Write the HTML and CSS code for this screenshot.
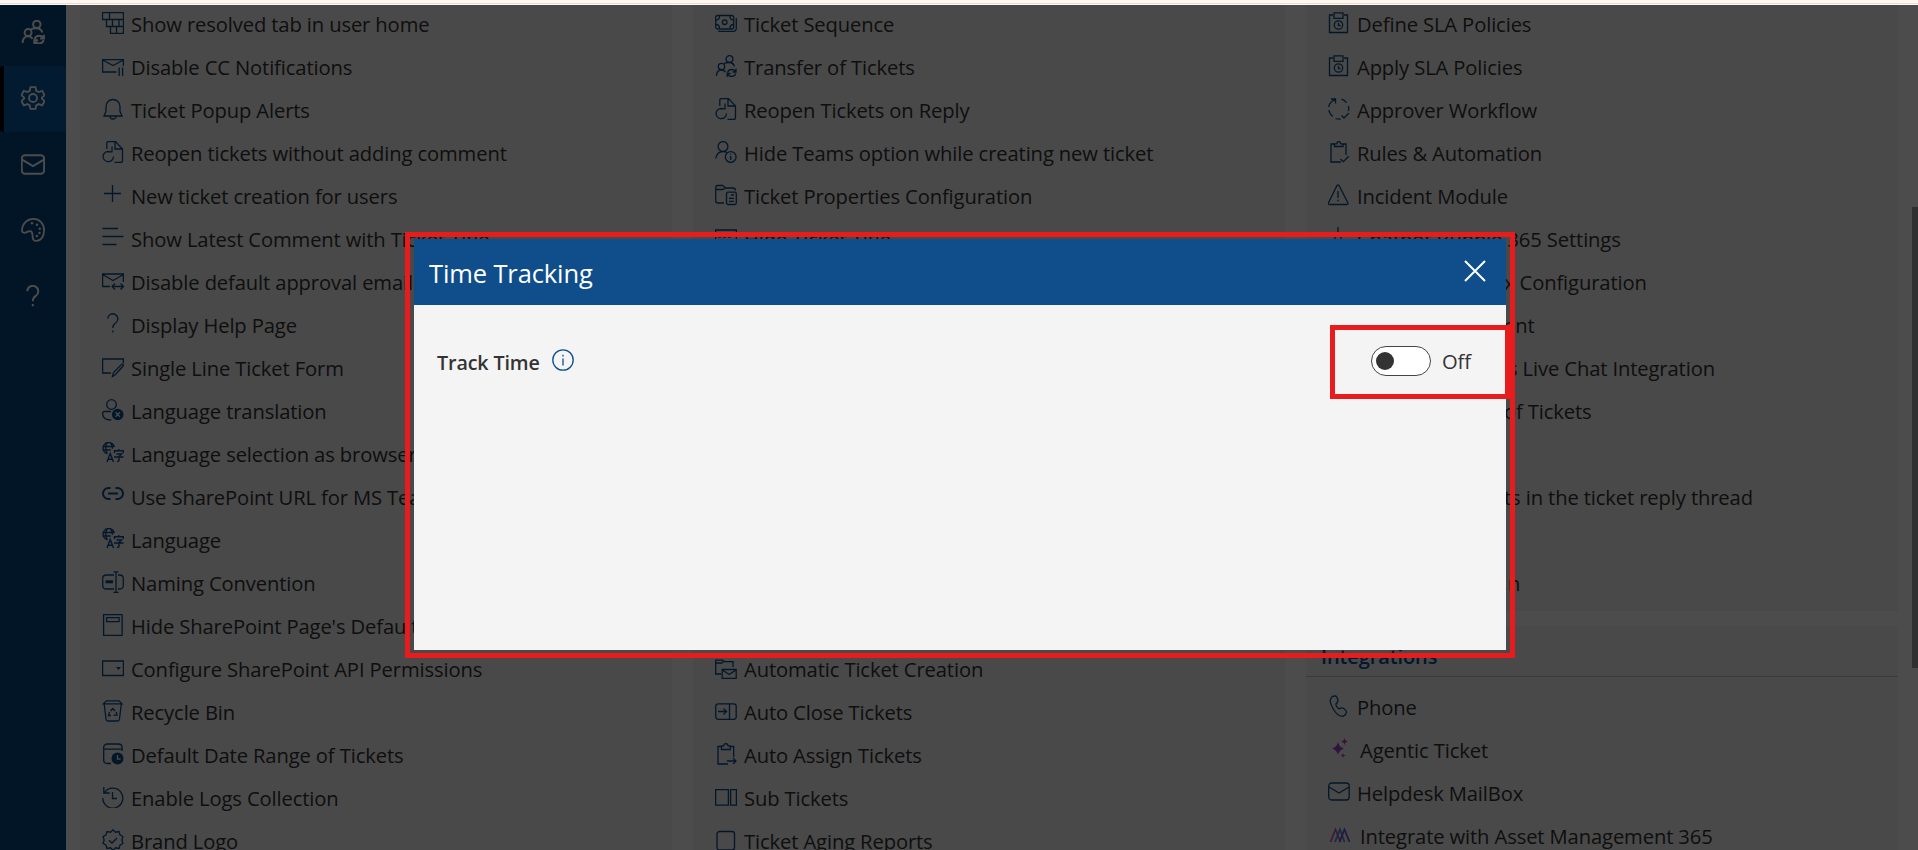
FILE: index.html
```
<!DOCTYPE html>
<html lang="en">
<head>
<meta charset="utf-8">
<title>Helpdesk settings</title>
<link rel="stylesheet" href="styles.css">
</head>
<body>
<svg class="sprite" aria-hidden="true">
  <symbol id="brick" viewBox="0 0 22 22"><path d="M.5.5h21v21h-13v-7h-4v-7h-4zM.5 7.500h21M4.500 14.500h17M7.500.5v7M10.500 7.500v7M17 7.500v7M14.500 14.500v7"/></symbol>
  <symbol id="mailpause" viewBox="0 0 22 22"><path d="M14.500 17H.6V4.600h20.800V11M.6 5l10.400 5.500L21.400 5M17.200 12.500v8.500M20.600 12.500v8.500"/></symbol>
  <symbol id="bell" viewBox="0 0 22 22"><path d="M2 18l2-4.500V8.500a7 7 0 0 1 14 0v5L20 18zM8 18.500a3 2.500 0 0 0 6 0"/></symbol>
  <symbol id="reopen" viewBox="0 0 22 22"><path d="M4.800 8V2.200q0-1.600 1.600-1.600H13.500L20.500 8v11.500q0 2-2 2h-6M13 .8V8h7.300M8.500 10.800a5.200 5.200 0 1 0 3 4.800M4.500 10.800h5.500V5.500"/></symbol>
  <symbol id="plus" viewBox="0 0 22 22"><path d="M2 9.500h17M10.500 1v17"/></symbol>
  <symbol id="lines" viewBox="0 0 22 22"><path d="M.5 1.500h15.500M.5 9.500h21M.5 17.500h14"/></symbol>
  <symbol id="mailarrow" viewBox="0 0 22 22"><path d="M8 16.500H.6V4h20.800v8M.6 4.500l10.400 6 10.400-6M10 16.500h11.500M13 13.500l-3 3 3 3M18.500 13.500l3 3-3 3"/></symbol>
  <symbol id="help" viewBox="0 0 22 22"><path d="M5.800 5.800a5 5 0 1 1 8 4q-3 2-3 5.200M10.800 17.500v2"/></symbol>
  <symbol id="formedit" viewBox="0 0 22 22"><path d="M9 17H.6V3h20.800v4.500M10.500 20.500l1-4 8-8q1.500-1 2 1l-8 9z"/></symbol>
  <symbol id="userx" viewBox="0 0 22 22"><circle cx="9.500" cy="5.500" r="4.800"/><path d="M9 12.500H2.500Q.7 12.500.7 14.500q0 6.500 8.500 6.500"/><circle class="solid" cx="15.700" cy="15.500" r="5.800"/><path class="knock" d="M13.500 13.300l4.400 4.400M17.900 13.300l-4.400 4.400"/></symbol>
  <symbol id="globe" viewBox="0 0 22 22"><path stroke-width="1.400" d="M5.500 11.800A5.700 5.700 0 1 1 12.300 5M.8 4.500h11.500M.8 8h8M5 .8q-2.500 5 0 10.500M8.500.8q2 2.500 2 6M5 20l3.200-8.500L11.500 20M6 17.200h4.500M12.500 11V8.800h8.700V11M16.800 7v1.800M14.500 12h5l-2.500 2.500v4q0 1-2 .8M12 15h9.500"/></symbol>
  <symbol id="link" viewBox="0 0 22 22"><path stroke-width="2" d="M8.500 3H6.500a5.500 5.500 0 0 0 0 11h2M13.500 3h2a5.500 5.500 0 0 1 0 11h-2M6 8.500h10"/></symbol>
  <symbol id="rename" viewBox="0 0 22 22"><path d="M12 18H4.500Q.7 18 .7 14.500v-7Q.7 4 4.500 4H12M16 4h1.500q3.800 0 3.800 3.500v7q0 3.500-3.800 3.500H16M14 .8v20.500M11.500.8h5M11.500 21.300h5"/><path stroke-width="3" d="M3.500 10.800h7.500"/></symbol>
  <symbol id="page" viewBox="0 0 22 22"><path d="M1.600.6h18.500v20.800H1.600zM4.600 3.600h12.500v4H4.600z"/></symbol>
  <symbol id="dropbox" viewBox="0 0 22 22"><path d="M.6 4h20.800v14.500H.6z"/><path class="solid" d="M14 10h5l-2.500 3z"/></symbol>
  <symbol id="bin" viewBox="0 0 22 22"><path d="M1.500 3.800L4.500.8h12.500l3 3zM2.200 4l1.800 15q.3 2 2 2h9.500q1.700 0 2-2L19.300 4"/><path d="M8.500 11l2.300-2.500 2.200 2.500M14.200 12l.8 3.200h-3.500M9 15.500H6.500l1-3.500"/></symbol>
  <symbol id="calclock" viewBox="0 0 22 22"><path d="M9 20.500H5.500q-3.800 0-3.800-3.500V4.500q0-3.500 3.800-3.500h10.800q3.800 0 3.800 3.500V8M1.700 6.200h18.400"/><circle class="solid" cx="15.500" cy="15.500" r="6"/><path class="knock" d="M15.500 12v4h3"/></symbol>
  <symbol id="history" viewBox="0 0 22 22"><path d="M2.500 6.500A10 10 0 1 1 .8 12M1.800 1v6h6M10.500 6v6.500h4.500"/></symbol>
  <symbol id="badge" viewBox="0 0 22 22"><path d="M11 .8l2.500 2.400 3.500-.7 1 3.400 3 1.800-1.200 3.300L21 14.300l-3 1.800-1 3.400-3.500-.7L11 21.200l-2.500-2.400-3.500.7-1-3.400-3-1.800L2.200 11 1 7.700l3-1.800 1-3.400 3.500.7zM7 11.300l3 2.700 5-5"/></symbol>
  <symbol id="cash" viewBox="0 0 22 22"><rect x=".7" y="3.500" width="18" height="13.500" rx="2"/><circle cx="9.700" cy="10.200" r="2.300"/><path d="M3.200 19.300H18q3.300 0 3.300-3.300V6M1 8q3.500 0 3.500-4M18.500 8Q15 8 15 4M1 12.500q3.500 0 3.500 4M18.500 12.500q-3.500 0-3.500 4"/></symbol>
  <symbol id="people" viewBox="0 0 22 22"><circle cx="14.500" cy="4" r="3.400"/><circle cx="6.500" cy="11.500" r="3.200"/><path d="M1.500 21q0-6 5-6 3 0 4 2.300M9 8.500q2-1 5-1 4.500 0 5.500 4M12.500 17.500q1-3 4-3 3 0 4.200 2.500M21 13.500v3.500h-3.500M20.800 18.500q-1 3-4.200 3t-4-2.500M12.200 22v-3.500h3.500"/></symbol>
  <symbol id="userinfo" viewBox="0 0 22 22"><circle cx="8" cy="5.500" r="4.900"/><path d="M.8 17.500Q2 10.500 8 10.500q2.500 0 4 1"/><circle cx="15.700" cy="16" r="5.400"/><path d="M15.700 15v4M15.700 12.700v1"/></symbol>
  <symbol id="folder" viewBox="0 0 22 22"><path d="M9 19H3Q.7 19 .7 17V3.500q0-2 2-2h5L10.500 4H18q2.500 0 2.500 2.500M.7 5.500h7L10.500 4"/><rect x="11.500" y="8.200" width="9.800" height="12.300" rx="1.500"/><path d="M16 11h3M14 14.300h5M14 17.300h5"/></symbol>
  <symbol id="card" viewBox="0 0 22 22"><path d="M.6 3h20.800v14H.6zM3 10h3M8 10h3M13 10h3"/></symbol>
  <symbol id="foldermail" viewBox="0 0 22 22"><path d="M6 17H.7V3.200h6.800l2 1.500H18V10M.7 6h6l2-1.500M7.200 12.500h14v9H7.200zM7.500 13l6.700 4.500 6.700-4.500"/></symbol>
  <symbol id="panelarrow" viewBox="0 0 22 22"><rect x=".7" y="3.800" width="20.500" height="15.500" rx="2.500"/><path d="M14.500 4v15M3 11.500h8.500M8.500 8.500l3 3-3 3"/></symbol>
  <symbol id="clipgo" viewBox="0 0 22 22"><path d="M13 21H3V3.500h3.500M15 3.500h3.700V14M6.500 2.800h2.200q.3-2.200 2.200-2.200t2.200 2.200h2.200V6.500H6.500zM12 18h8.800M18 15l3 3-3 3"/></symbol>
  <symbol id="panels" viewBox="0 0 22 22"><path d="M.6 3.600h12.800v15.500H.6zM15.600 3.600h5.800v15.500h-5.800z"/></symbol>
  <symbol id="square" viewBox="0 0 22 22"><rect x="2" y="2.500" width="17.500" height="18.500" rx="2.500"/></symbol>
  <symbol id="sla" viewBox="0 0 22 22"><path d="M5 3H1.500v17.500h18V3H16M6 .8h9v5.500H6z"/><circle cx="10.500" cy="13" r="4.200"/><path d="M10.500 10.800v2.700h2"/></symbol>
  <symbol id="cycle" viewBox="0 0 22 22"><path d="M3 1h4.500v4.500M7.500 1Q.7 5 .8 9M.9 12q.5 4 3.800 6.500M7.500 20.500q2.500 1 5 .5M13.500 1.200q3 .8 5 3.500M20.300 8q1 3 0 5M13.500 17.500l2.500 2.500 5-5"/></symbol>
  <symbol id="clipcheck" viewBox="0 0 22 22"><path d="M13 21H3V3h4M14.500 3H18v11M6.500 5.500V2.800h2.200q.3-2.200 2-2.200t2 2.200H15v2.700zM12.500 18l2.800 2.700 5.500-5.500"/></symbol>
  <symbol id="warn" viewBox="0 0 22 22"><path d="M8.800 1.800q1.200-2 2.400 0l8.600 17q.7 1.700-1.300 1.700H1.700q-2 0-1.200-1.700zM10 7v7M10 15.800v1.700"/></symbol>
  <symbol id="bot" viewBox="0 0 22 22"><path d="M10 0v5M2 9q2-2 4-2h8q3 0 4 2M7 10v2M13 10v2"/></symbol>
  <symbol id="phone" viewBox="0 0 22 22"><path d="M3.200 2.800q1-2 4-2Q9 1 9.800 4.500q.6 2.500-1.800 4.300-.5 3 2.800 5 3-1.500 4.500-.6 3.700 2.300 3.200 4.300-1.500 3.800-4.500 3.800Q9.500 21.300 5 13.500.5 6 3.200 2.800z"/></symbol>
  <symbol id="spark" viewBox="0 0 22 22"><path fill="#9a48d0" d="M10 4q1 5 6 6.500-5 1.500-6 6.500-1-5-6-6.500 5-1.500 6-6.500z"/><path fill="#c63bc8" d="M16.500 0l1 2.500 2.500 1-2.500 1-1 2.500-1-2.500-2.500-1 2.500-1zM15 15l.7 1.800 1.800.7-1.800.7L15 20l-.7-1.800-1.800-.7 1.800-.7z"/></symbol>
  <symbol id="mail" viewBox="0 0 22 22"><rect x=".7" y="2" width="20.500" height="17" rx="3"/><path d="M1 6l10 6 10-6"/></symbol>
  <symbol id="asset" viewBox="0 0 22 22"><g stroke-width="1.700"><path stroke="#d04fc4" d="M2.500 18L7.500 5.500l5 12.500"/><path stroke="#3f9bd8" d="M7 18l5-12.500L16.500 18"/><path stroke="#8b45d6" d="M11.500 18l5-12.500L21.500 18"/></g></symbol>
  <symbol id="gear" viewBox="0 0 24 24"><circle cx="12" cy="12" r="4"/><path d="M9.500 1.200h5l.8 3.600 2.300 1.300 3.600-1.200 2.400 4.300-2.700 2.400v1l2.700 2.400-2.400 4.300-3.600-1.200-2.300 1.300-.8 3.500h-5l-.8-3.500-2.300-1.300-3.600 1.200L.4 15l2.700-2.400v-1L.4 9.200l2.400-4.300 3.600 1.200 2.300-1.300z"/></symbol>
  <symbol id="palette" viewBox="0 0 24 24"><path d="M.9 12C1.500 5 6.500.9 12.500.9c6 0 10.600 4.600 10.600 11.300 0 6-3 10.700-7.500 10.700-3 0-4-2.200-4-4.500 0-4-1-5.800-4-5-2 .6-3.300 1.800-5 1.300C1.200 14.300.8 13.500.9 12z"/><g class="solid"><circle cx="11" cy="5.200" r="1.200"/><circle cx="16" cy="6.800" r="1.200"/><circle cx="18.800" cy="10.800" r="1.200"/><circle cx="18.500" cy="15" r="1.200"/><circle cx="15.800" cy="18" r="1.200"/></g></symbol>
</svg>

<div class="topline"></div>
<div class="app">
  <nav class="rail">
    <a class="tab"><svg><use href="#people"/></svg></a>
    <a class="tab active"><svg><use href="#gear"/></svg></a>
    <a class="tab"><svg><use href="#mail"/></svg></a>
    <a class="tab raised"><svg><use href="#palette"/></svg></a>
    <a class="tab"><svg><use href="#help"/></svg></a>
  </nav>
  <main class="columns">
    <section class="card">
      <ul class="list">
        <li><svg><use href="#brick"/></svg><span>Show resolved tab in user home</span></li>
        <li><svg><use href="#mailpause"/></svg><span>Disable CC Notifications</span></li>
        <li><svg><use href="#bell"/></svg><span>Ticket Popup Alerts</span></li>
        <li><svg><use href="#reopen"/></svg><span>Reopen tickets without adding comment</span></li>
        <li><svg><use href="#plus"/></svg><span>New ticket creation for users</span></li>
        <li><svg><use href="#lines"/></svg><span>Show Latest Comment with Ticket Title</span></li>
        <li><svg><use href="#mailarrow"/></svg><span>Disable default approval email</span></li>
        <li><svg><use href="#help"/></svg><span>Display Help Page</span></li>
        <li><svg><use href="#formedit"/></svg><span>Single Line Ticket Form</span></li>
        <li><svg><use href="#userx"/></svg><span>Language translation</span></li>
        <li><svg><use href="#globe"/></svg><span>Language selection as browser</span></li>
        <li><svg><use href="#link"/></svg><span>Use SharePoint URL for MS Teams</span></li>
        <li><svg><use href="#globe"/></svg><span>Language</span></li>
        <li><svg><use href="#rename"/></svg><span>Naming Convention</span></li>
        <li><svg><use href="#page"/></svg><span>Hide SharePoint Page's Default</span></li>
        <li><svg><use href="#dropbox"/></svg><span>Configure SharePoint API Permissions</span></li>
        <li><svg><use href="#bin"/></svg><span>Recycle Bin</span></li>
        <li><svg><use href="#calclock"/></svg><span>Default Date Range of Tickets</span></li>
        <li><svg><use href="#history"/></svg><span>Enable Logs Collection</span></li>
        <li><svg><use href="#badge"/></svg><span>Brand Logo</span></li>
      </ul>
    </section>
    <section class="card">
      <ul class="list">
        <li><svg><use href="#cash"/></svg><span>Ticket Sequence</span></li>
        <li><svg><use href="#people"/></svg><span>Transfer of Tickets</span></li>
        <li><svg><use href="#reopen"/></svg><span>Reopen Tickets on Reply</span></li>
        <li><svg><use href="#userinfo"/></svg><span>Hide Teams option while creating new ticket</span></li>
        <li><svg><use href="#folder"/></svg><span>Ticket Properties Configuration</span></li>
        <li><svg><use href="#card"/></svg><span>Hide Ticket Title</span></li>
      </ul>
      <ul class="list later">
        <li><svg><use href="#foldermail"/></svg><span>Automatic Ticket Creation</span></li>
        <li><svg><use href="#panelarrow"/></svg><span>Auto Close Tickets</span></li>
        <li><svg><use href="#clipgo"/></svg><span>Auto Assign Tickets</span></li>
        <li><svg><use href="#panels"/></svg><span>Sub Tickets</span></li>
        <li><svg><use href="#square"/></svg><span>Ticket Aging Reports</span></li>
      </ul>
    </section>
    <div class="stack">
      <section class="card upper">
        <ul class="list">
          <li><svg><use href="#sla"/></svg><span>Define SLA Policies</span></li>
          <li><svg><use href="#sla"/></svg><span>Apply SLA Policies</span></li>
          <li><svg><use href="#cycle"/></svg><span>Approver Workflow</span></li>
          <li><svg><use href="#clipcheck"/></svg><span>Rules &amp; Automation</span></li>
          <li><svg><use href="#warn"/></svg><span>Incident Module</span></li>
          <li><svg><use href="#bot"/></svg><span>Chatbot Bubble 365 Settings</span></li>
          <li class="tail"><span>x Configuration</span></li>
          <li class="tail"><span>ent</span></li>
          <li class="tail further"><span>s Live Chat Integration</span></li>
          <li class="tail"><span>of Tickets</span></li>
          <li></li>
          <li class="tail"><span>ts in the ticket reply thread</span></li>
          <li></li>
          <li class="tail further"><span>n</span></li>
        </ul>
      </section>
      <section class="card lower">
        <h2 class="heading">Integrations</h2>
        <ul class="list">
          <li><svg><use href="#phone"/></svg><span>Phone</span></li>
          <li class="wide"><svg class="flat"><use href="#spark"/></svg><span>Agentic Ticket</span></li>
          <li><svg><use href="#mail"/></svg><span>Helpdesk MailBox</span></li>
          <li class="wide"><svg><use href="#asset"/></svg><span>Integrate with Asset Management 365</span></li>
        </ul>
      </section>
    </div>
  </main>
</div>

<div class="overlay"><div class="thumb"></div></div>
<div class="dialog" role="dialog">
  <header class="dialog-head">
    <h1 class="dialog-title">Time Tracking</h1>
    <svg class="close" viewBox="0 0 22 22"><path d="M1 1l20 20M21 1L1 21"/></svg>
  </header>
  <div class="dialog-body">
    <span class="label">Track Time</span>
    <svg class="info" viewBox="0 0 22 22"><circle cx="11" cy="11" r="10.200"/><path d="M11 9.500v7M11 5.800v1.600"/></svg>
    <span class="toggle"><i class="knob"></i></span>
    <span class="state">Off</span>
  </div>
</div>
<div class="mark mark-dialog"></div>
<div class="mark mark-toggle"></div>
</body>
</html>
```
FILE: styles.css
```
* { box-sizing: border-box; }
body {
  margin: 0;
  height: 850px;
  overflow: hidden;
  background: #fff;
  font-family: "Open Sans", "Noto Sans", sans-serif;
  font-size: 20.2px;
  letter-spacing: -0.006em;
  color: #333;
}
.sprite { position: absolute; width: 0; height: 0; }
.topline { height: 5px; background: #fff8f2; border-bottom: 1px solid #fff8f2; box-shadow: inset 0 -1px #ebdccd; }
.app { display: flex; height: 845px; overflow: hidden; }
svg { fill: none; color: #0f4e8a; stroke: currentColor; stroke-width: 1.3; flex: none; }
.solid { fill: currentColor; stroke: none; }
.knock { stroke: #f4f4f4; }

.rail { width: 66px; background: #084680; }
.tab { display: flex; justify-content: center; align-items: center; height: 66px; }
.tab:first-child { height: 61px; padding-bottom: 8px; }
.tab.raised { padding-bottom: 3px; }
.tab svg { width: 24px; height: 24px; color: #fff; stroke-width: 1.8; }
.tab.active { background: #0c5aa0; border-left: 4px solid #000; padding: 0 4px 3px 0; border-radius: 3px; }

.columns { flex: 1; display: flex; gap: 21px; padding: 0 20px 0 14px; }
.card { flex: 1; background: #f4f4f4; overflow: hidden; }
.stack { flex: 1; display: flex; flex-direction: column; gap: 15px; }
.upper { flex: none; height: 606px; }
.lower { flex: 1; }
.list { list-style: none; margin: -2px 0 0; padding: 0 0 0 22px; }
.list li { display: flex; align-items: center; gap: 7px; height: 43px; white-space: nowrap; }
.list li span { padding-bottom: 2px; }
.list svg { width: 22px; height: 22px; margin-bottom: 4px; }
.list .flat { stroke: none; }
.list .wide { gap: 10px; }
.later { margin-top: 387px; }
.list .tail { padding-left: 176px; }
.list .further { padding-left: 180px; }
.heading {
  height: 51px;
  margin: 0;
  padding: 16px 0 0 15px;
  border-bottom: 1px solid #c4c4c4;
  font-size: 20px;
  line-height: 29px;
  font-weight: 600;
  color: #0f4e8a;
}
.lower .list { margin-top: 9px; }

.overlay { position: absolute; inset: 5px 0 0; background: rgba(0, 0, 0, .7); }
.thumb { position: absolute; right: 0; top: 202px; width: 6px; height: 461px; background: #303030; }

.dialog { position: absolute; left: 414px; top: 239px; width: 1092px; height: 411px; background: #f4f4f4; }
.dialog-head { display: flex; justify-content: space-between; align-items: center; height: 66px; padding: 0 20px 0 15px; background: #0f4e8a; }
.dialog-title { margin: 0; font-size: 25.5px; font-weight: 400; color: #fff; padding-top: 2px; }
.close { width: 22px; height: 22px; margin-bottom: 2px; color: #fff; stroke-width: 2; }
.dialog-body { display: flex; align-items: center; height: 112px; padding: 0 34px 0 23px; }
.label { font-size: 19.7px; font-weight: 600; padding-top: 3px; }
.info { width: 22px; height: 22px; margin: 0 0 3px 12px; }
.toggle { display: flex; align-items: center; width: 60px; height: 30px; margin-left: auto; padding-left: 4px; border: 1px solid #444; border-radius: 15px; background: #fff; }
.knob { width: 18px; height: 18px; border-radius: 50%; background: #333; }
.state { margin-left: 11px; width: 30px; padding-bottom: 1px; }

.mark { position: absolute; border: 5px solid #e81c1c; }
.mark-dialog { left: 405px; top: 232px; width: 1110px; height: 426px; }
.mark-toggle { left: 1330px; top: 325px; width: 180px; height: 74px; }
```
